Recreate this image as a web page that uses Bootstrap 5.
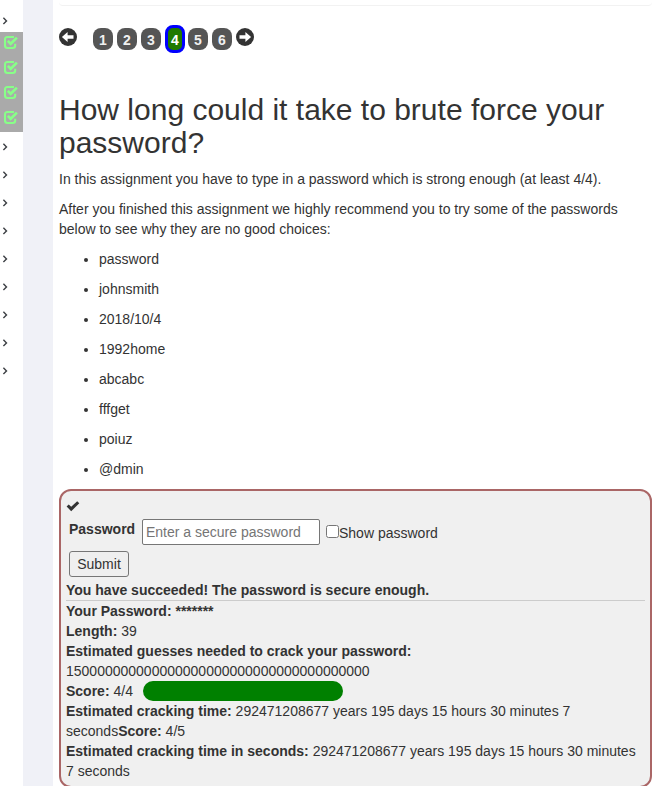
<!DOCTYPE html>
<html lang="en">
<head>
<meta charset="utf-8">
<title>Password strength</title>
<link href="https://cdn.jsdelivr.net/npm/bootstrap@5.3.0/dist/css/bootstrap.min.css" rel="stylesheet">
<style>
body{font:14px/20px "Liberation Sans",Arial,sans-serif;color:#333;background:#fff;height:786px}
.side{width:23px}
.gutter{width:30px;background:#f0f1f7}
.chev{height:28px;padding-left:2px}
.chev.first{height:32px;padding-top:17px}
.chevs{padding-top:11px}
.chev svg,.tick svg{display:block}
.done{background:#aaa;height:100px}
.tick{height:25px;padding:3px 0 0 3px}
.main{padding:0 6px}
.topcard{height:6px;border-bottom:1px solid #f2f2f2;border-radius:0 0 4px 4px}
.pager{margin-top:19px;height:28px}
.pager svg{margin-top:3px;display:block}
.pg{width:20px;height:22px;border-radius:8px;background:#555;color:#f0f0f0;font-weight:700;line-height:24px;margin-top:3px;margin-right:4px;text-align:center}
.pg.on{height:28px;margin-top:0;margin-right:3px;border:3px solid #00f;background:#207a00;color:#fff}
h1{font-size:30px;line-height:33px;font-weight:400;margin:40px 0 10px}
p{margin:0 0 10px}
ul.samples{padding-left:40px;margin:0}
.attack{border:2px solid #a66;border-radius:12px;background:#f0f0f0;padding:5px;height:299px}
.flag{height:23px;padding-top:4px}
.flag svg{display:block}
.pwlabel{width:72px;padding-left:3px}
.showlabel{padding-top:4px}
.pw{width:178px;height:26px;border:1px solid #767676;border-radius:2px;padding:1px 3px;font-size:14px;line-height:20px;background:#fff}
.pw::placeholder{color:#757575;opacity:1}
.chk{width:13px;height:13px;margin:6px 0 0 6px}
.send{width:60px;height:26px;border:1px solid #767676;border-radius:3px;background:#efefef;color:#333;padding:0;font-size:14px;line-height:22px;margin:6px 0 3px 3px}
.msg{height:21px;border-bottom:1px solid #ccc}
.bar{width:200px;height:20px;border-radius:10px;background:green;margin-left:10px}
</style>
<script src="https://cdn.jsdelivr.net/npm/bootstrap@5.3.0/dist/js/bootstrap.bundle.min.js"></script>
</head>
<body class="d-flex overflow-hidden">
<svg class="d-none">
<symbol id="c" viewBox="0 0 6 8"><path d="M1.400 .8 4.500 3.900 1.400 7" fill="none" stroke="#3d4045" stroke-width="1.400"/></symbol>
<symbol id="t" viewBox="0 0 16 16"><path d="M11 2H4.500Q2 2 2 4.500V10.500Q2 13 4.500 13H9.700Q12.200 13 12.200 10.500V8.800" fill="none" stroke="#8f8" stroke-width="2.100"/><path d="M4.800 5.900 7.700 8.800 13.900 2.600" fill="none" stroke="#8f8" stroke-width="2.700"/></symbol>
<symbol id="l" viewBox="0 0 18 18"><circle cx="9" cy="9" r="9" fill="#333"/><path d="M2.900 9 8.600 3.900V7.200H14.500V10.800H8.600V14.100Z" fill="#fff"/></symbol>
</svg>
<aside class="side flex-shrink-0">
<div class="chev first"><svg width="6" height="8"><use href="#c"/></svg></div>
<div class="done">
<div class="tick"><svg width="16" height="16"><use href="#t"/></svg></div>
<div class="tick"><svg width="16" height="16"><use href="#t"/></svg></div>
<div class="tick"><svg width="16" height="16"><use href="#t"/></svg></div>
<div class="tick"><svg width="16" height="16"><use href="#t"/></svg></div>
</div>
<div class="chevs">
<div class="chev"><svg width="6" height="8"><use href="#c"/></svg></div>
<div class="chev"><svg width="6" height="8"><use href="#c"/></svg></div>
<div class="chev"><svg width="6" height="8"><use href="#c"/></svg></div>
<div class="chev"><svg width="6" height="8"><use href="#c"/></svg></div>
<div class="chev"><svg width="6" height="8"><use href="#c"/></svg></div>
<div class="chev"><svg width="6" height="8"><use href="#c"/></svg></div>
<div class="chev"><svg width="6" height="8"><use href="#c"/></svg></div>
<div class="chev"><svg width="6" height="8"><use href="#c"/></svg></div>
<div class="chev"><svg width="6" height="8"><use href="#c"/></svg></div>
</div>
</aside>
<div class="gutter flex-shrink-0"></div>
<main class="main flex-grow-1">
<div class="topcard"></div>
<nav class="pager d-flex align-items-start">
<svg class="me-3" width="18" height="18"><use href="#l"/></svg>
<span class="pg">1</span><span class="pg">2</span><span class="pg">3</span><span class="pg on">4</span><span class="pg">5</span><span class="pg">6</span>
<svg width="18" height="18"><use href="#l" transform="translate(18 0) scale(-1 1)"/></svg>
</nav>
<h1>How long could it take to brute force your password?</h1>
<p>In this assignment you have to type in a password which is strong enough (at least 4/4).</p>
<p>After you finished this assignment we highly recommend you to try some of the passwords below to see why they are no good choices:</p>
<ul class="samples">
<li><p>password</p></li><li><p>johnsmith</p></li><li><p>2018/10/4</p></li><li><p>1992home</p></li><li><p>abcabc</p></li><li><p>fffget</p></li><li><p>poiuz</p></li><li><p>@dmin</p></li>
</ul>
<section class="attack">
<div class="flag"><svg width="14" height="12" viewBox="0 0 14 12"><path d="M.6 6.500 2.700 4.400 5.200 6.800 11.200 1.200 13.300 3.300 5.200 11.200Z" fill="#333"/></svg></div>
<form>
<div class="d-flex">
<label class="fw-bold pwlabel" for="pw">Password</label>
<div class="d-flex flex-shrink-0"><input id="pw" class="pw ms-1" type="text" placeholder="Enter a secure password"><input id="sh" class="chk" type="checkbox"><label class="showlabel" for="sh">Show password</label></div>
</div>
<button class="send d-block" type="button">Submit</button>
</form>
<div class="msg fw-bold">You have succeeded! The password is secure enough.</div>
<div><b>Your Password: *******</b></div>
<div><b>Length:</b> 39</div>
<div><b>Estimated guesses needed to crack your password:</b><br>150000000000000000000000000000000000000</div>
<div class="d-flex"><div><b>Score:</b> 4/4</div><div class="bar"></div></div>
<div><b>Estimated cracking time:</b> 292471208677 years 195 days 15 hours 30 minutes 7 seconds<b>Score:</b> 4/5</div>
<div><b>Estimated cracking time in seconds:</b> 292471208677 years 195 days 15 hours 30 minutes 7 seconds</div>
</section>
</main>
</body>
</html>
